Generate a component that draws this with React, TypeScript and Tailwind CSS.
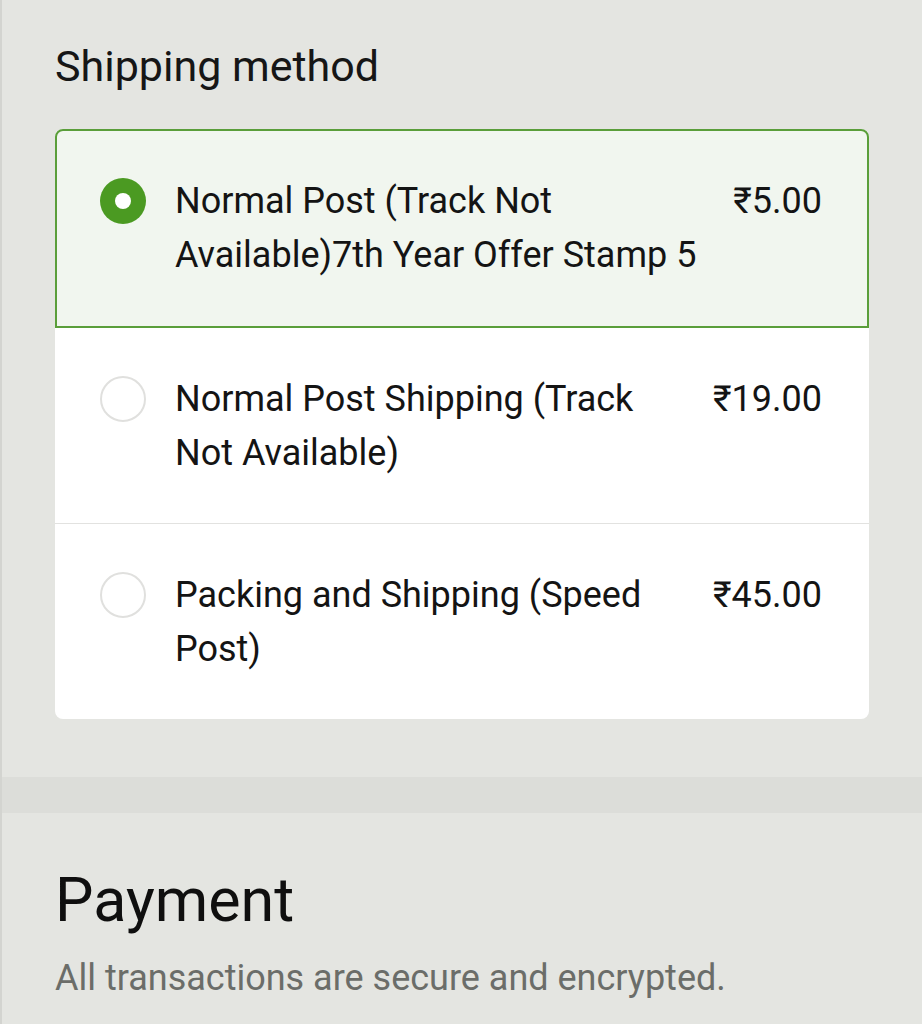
import { useState } from "react";

interface ShippingOption {
  id: string;
  lines: string[];
  price: string;
}

const options: ShippingOption[] = [
  { id: "normal-offer", lines: ["Normal Post (Track Not", "Available)7th Year Offer Stamp 5"], price: "₹5.00" },
  { id: "normal", lines: ["Normal Post Shipping (Track", "Not Available)"], price: "₹19.00" },
  { id: "speed", lines: ["Packing and Shipping (Speed", "Post)"], price: "₹45.00" },
];

function Radio({ checked }: { checked: boolean }) {
  if (checked) {
    return (
      <span className="flex h-[46px] w-[46px] shrink-0 items-center justify-center rounded-full bg-[#4b9a22]">
        <span className="block h-[16px] w-[16px] rounded-full bg-white" />
      </span>
    );
  }
  return <span className="block h-[46px] w-[46px] shrink-0 rounded-full border-2 border-[#e0e0de] bg-white" />;
}

export default function App() {
  const [selected, setSelected] = useState<string>("normal-offer");

  return (
    <div
      className="min-h-[1024px] w-full border-l-2 border-[#d3d4d0] bg-[#e4e5e1] text-[#111]"
      style={{ fontFamily: "Roboto, 'Noto Sans', sans-serif" }}
    >
      {/* shipping */}
      <section className="px-[53px] pt-[40px] pb-[58px]">
        <h2 className="text-[43px] leading-[52px] text-[#161616]">Shipping method</h2>
        <div className="mt-[37px] rounded-[8px] bg-white">
          {options.map((opt, i) => {
            const active = opt.id === selected;
            return (
              <button
                key={opt.id}
                onClick={() => setSelected(opt.id)}
                className={`flex w-full items-start gap-[29px] text-left ${
                  active
                    ? "rounded-t-[8px] border-2 border-[#5a9e3a] bg-[#f1f6ef] pl-[43px] pr-[45px] pt-[43px] pb-[44px]"
                    : "pl-[45px] pr-[47px] pt-[44px] pb-[43px]"
                } ${i === 1 ? "border-b border-[#e2e2e0]" : ""}`}
              >
                <span className="mt-[4px] block shrink-0">
                  <Radio checked={active} />
                </span>
                <span className="min-w-0 flex-1 text-[36px] leading-[54px] text-[#141414]">
                  {opt.lines.map((l) => (
                    <span key={l} className="block whitespace-nowrap">
                      {l}
                    </span>
                  ))}
                </span>
                <span className="ml-[14px] shrink-0 text-[36px] leading-[54px] text-[#141414]">{opt.price}</span>
              </button>
            );
          })}
        </div>
      </section>

      <div className="h-[36px] bg-[#dcddd9]" />

      {/* payment */}
      <section className="px-[53px] pt-[51px]">
        <h2 className="text-[61px] leading-[72px] text-[#0f0f0f]">Payment</h2>
        <p className="mt-[20px] text-[36px] leading-[44px] text-[#6b6d69]">
          All transactions are secure and encrypted.
        </p>
      </section>
    </div>
  );
}
